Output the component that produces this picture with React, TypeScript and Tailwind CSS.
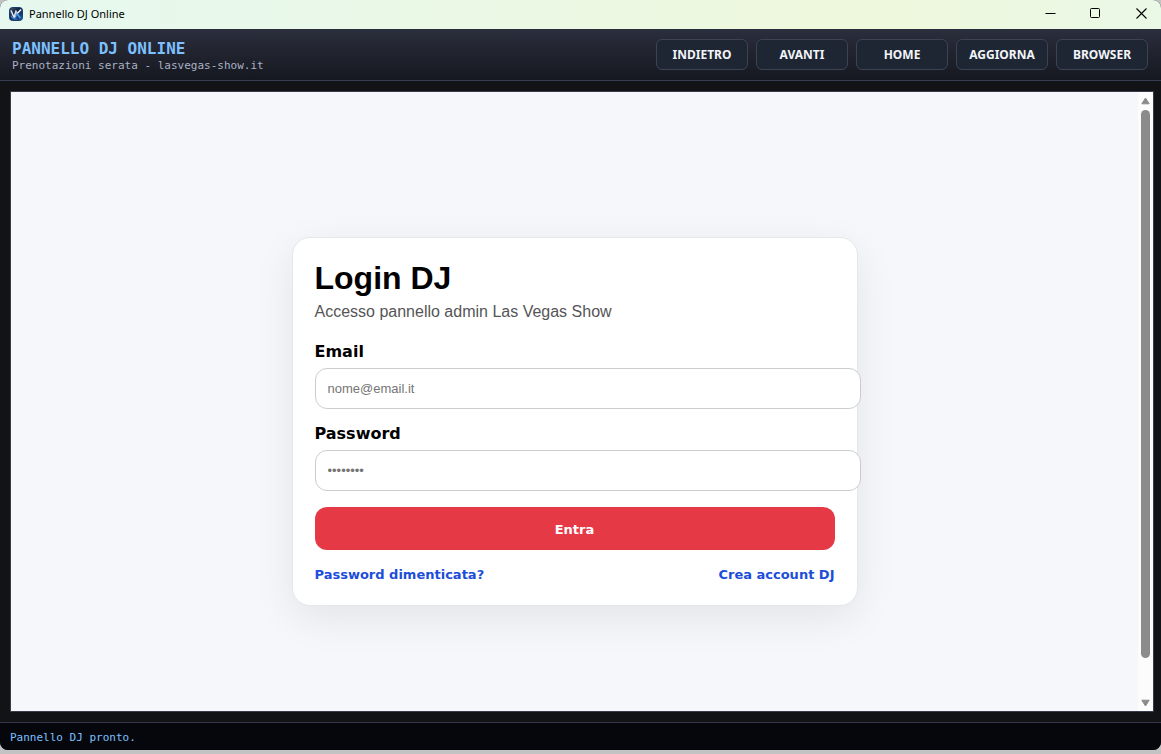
import React from "react";

const toolbarActions = ["INDIETRO", "AVANTI", "HOME", "AGGIORNA", "BROWSER"];

function AppLogo() {
  return (
    <svg width="14" height="14" viewBox="0 0 14 14" aria-hidden="true">
      <defs>
        <linearGradient id="logo-bg" x1="0" y1="0" x2="1" y2="1">
          <stop offset="0" stopColor="#4a5a74" />
          <stop offset="0.45" stopColor="#0c1e3d" />
          <stop offset="1" stopColor="#1d62b4" />
        </linearGradient>
      </defs>
      <rect x="0.5" y="0.5" width="13" height="13" rx="3" fill="url(#logo-bg)" stroke="#1c3a66" />
      <path d="M2 3.5 L5 10.5 L7.2 3.5" fill="none" stroke="#dce6f2" strokeWidth="1.6" />
      <path d="M7.5 4 L6.6 10.5" fill="none" stroke="#a9c3e3" strokeWidth="1.2" />
      <path d="M12 2.5 L8 6.8" fill="none" stroke="#eef5fc" strokeWidth="1.6" />
      <path d="M8 6.8 L11.5 11" fill="none" stroke="#3c9cf0" strokeWidth="1.8" />
      <path d="M2 8.5 Q3 12.2 8 12" fill="none" stroke="#2f7fd6" strokeWidth="1.2" />
    </svg>
  );
}

function TitleBar() {
  return (
    <div className="flex h-[29px] shrink-0 items-center justify-between bg-linear-to-r from-[#e6f8ef] via-[#eef8dc] via-75% to-[#eaf8e6] pl-[9px]">
      <div className="flex items-center gap-[6px] pb-[2px]">
        <AppLogo />
        <span className="font-['Noto_Sans',sans-serif] text-[11px] leading-4 text-black">
          Pannello DJ Online
        </span>
      </div>
      <div className="flex h-full items-center pb-[2px] text-black">
        <button type="button" aria-label="Riduci a icona" className="flex w-[45px] justify-center">
          <svg width="11" height="11" viewBox="0 0 11 11">
            <path d="M0.5 5.5 H10.5" stroke="currentColor" />
          </svg>
        </button>
        <button type="button" aria-label="Ingrandisci" className="flex w-[45px] justify-center">
          <svg width="11" height="11" viewBox="0 0 11 11">
            <rect x="0.5" y="0.5" width="9" height="9" rx="1" fill="none" stroke="currentColor" />
          </svg>
        </button>
        <button type="button" aria-label="Chiudi" className="flex w-[43px] justify-center pl-1">
          <svg width="11" height="11" viewBox="0 0 11 11">
            <path d="M0.5 0.5 L10.5 10.5 M10.5 0.5 L0.5 10.5" stroke="currentColor" strokeWidth="1.1" />
          </svg>
        </button>
      </div>
    </div>
  );
}

function Toolbar() {
  return (
    <header className="flex h-[52px] shrink-0 items-center justify-between border-b border-[#383d50] bg-linear-to-b from-[#2b2e3c] to-[#161820] pr-[13px] pl-3">
      <div className="pt-1 font-['DejaVu_Sans_Mono',monospace]">
        <h1 className="text-base leading-[18px] font-bold text-[#7cc0ff]">PANNELLO DJ ONLINE</h1>
        <p className="text-[11px] leading-4 text-[#a9b1c4]">
          Prenotazioni serata - lasvegas-show.it
        </p>
      </div>
      <nav className="flex gap-2">
        {toolbarActions.map((label) => (
          <button
            key={label}
            type="button"
            className="h-[31px] w-[92px] rounded-md border border-[#3d4352] bg-[#1f2633] font-['Noto_Sans',sans-serif] text-xs font-bold text-[#f1f4f9]"
          >
            {label}
          </button>
        ))}
      </nav>
    </header>
  );
}

const labelClass = "mb-1 block font-['DejaVu_Sans',sans-serif] text-base leading-6 font-bold text-black";
const inputClass =
  "box-content block h-[15px] w-full rounded-xl border border-[#cccccc] bg-white p-3 text-[13px] leading-[15px] placeholder:text-[#757575] focus:outline-none";

function LoginCard() {
  return (
    <section className="w-[566px] rounded-[18px] border border-[#e5e7eb] bg-white p-[22px] pb-5 font-['Liberation_Sans',Arial,sans-serif] shadow-[0_12px_40px_rgba(0,0,0,0.08)]">
      <h2 className="text-[32px] leading-[37px] font-bold text-black">Login DJ</h2>
      <p className="mt-[6px] text-base leading-[18px] text-[#555555]">
        Accesso pannello admin Las Vegas Show
      </p>
      <form className="mt-[19px]" onSubmit={(event) => event.preventDefault()}>
        <label htmlFor="email" className={labelClass}>
          Email
        </label>
        <input id="email" type="email" placeholder="nome@email.it" className={inputClass} />
        <div className="mt-[13px]">
          <label htmlFor="password" className={labelClass}>
            Password
          </label>
          <input id="password" type="password" placeholder="••••••••" className={inputClass} />
        </div>
        <button
          type="submit"
          className="mt-4 h-[43px] w-full rounded-xl bg-[#e63946] pt-[2px] font-['DejaVu_Sans',sans-serif] text-[13px] font-bold text-white"
        >
          Entra
        </button>
      </form>
      <div className="mt-[15px] flex justify-between font-['DejaVu_Sans',sans-serif] text-[13px] leading-5 font-bold text-[#1d4ed8]">
        <a href="#password">Password dimenticata?</a>
        <a href="#account">Crea account DJ</a>
      </div>
    </section>
  );
}

function ScrollBar() {
  return (
    <div className="flex w-[15px] shrink-0 flex-col items-center gap-[5px] bg-[#fcfcfc] pt-[5px] pb-[4px] text-[#8b8b8b]">
      <svg width="9" height="8" viewBox="0 0 9 8" className="shrink-0">
        <path d="M4.5 1 L8.2 6.8 H0.8 Z" fill="currentColor" stroke="currentColor" strokeLinejoin="round" />
      </svg>
      <div className="w-[9px] grow rounded-full bg-[#8b8b8b]" />
      <div className="h-[31px] shrink-0" />
      <svg width="9" height="8" viewBox="0 0 9 8" className="shrink-0">
        <path d="M4.5 7 L8.2 1.2 H0.8 Z" fill="currentColor" stroke="currentColor" strokeLinejoin="round" />
      </svg>
    </div>
  );
}

export default function App() {
  return (
    <div className="min-h-screen bg-[#c2c3c2] pb-1">
      <div className="flex h-[calc(100vh-4px)] flex-col overflow-hidden rounded-lg bg-[#121317]">
        <TitleBar />
        <Toolbar />
        <main className="flex min-h-0 grow pt-[10px] pr-[7px] pb-[10px] pl-[10px]">
          <div className="flex grow border border-[#383b49] bg-[#f5f7fb]">
            <div className="flex grow items-center justify-center overflow-hidden pt-10">
              <LoginCard />
            </div>
            <ScrollBar />
          </div>
        </main>
        <footer className="flex h-7 shrink-0 items-center border-t border-[#303747] bg-[#05070c] px-[10px] pt-[2px] font-['DejaVu_Sans_Mono',monospace] text-[11px] leading-4 text-[#7cc0ff]">
          Pannello DJ pronto.
        </footer>
      </div>
    </div>
  );
}
